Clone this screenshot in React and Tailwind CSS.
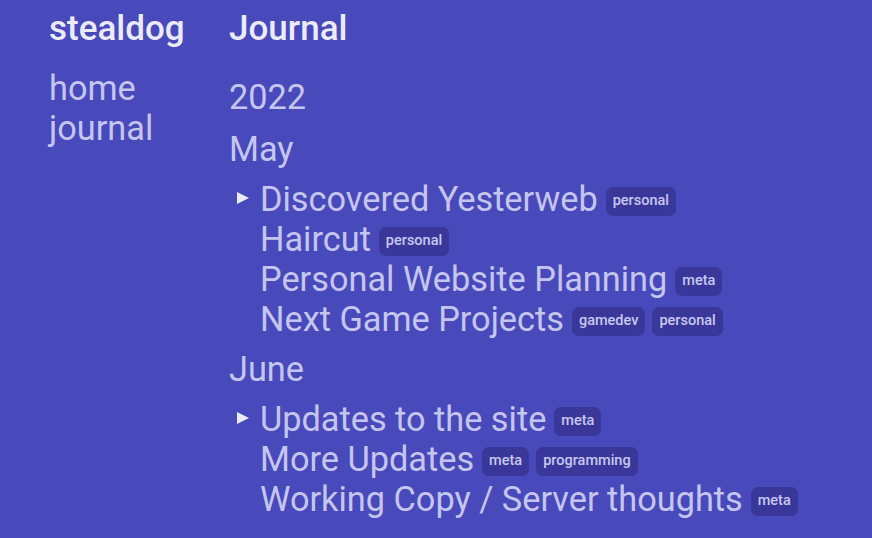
export default function App() {
  const Tag = ({ children }) => (
    <span className="relative top-[2px] inline-flex items-center h-[29px] px-[7px] rounded-[7px] bg-[#39379a] text-[14.5px] font-medium text-[#c8c8f0] leading-none">
      {children}
    </span>
  );
  const Entry = ({ title, tags, marker }) => (
    <div className="relative flex items-center h-[40px] leading-[40px]">
      {marker && (
        <span className="absolute left-[-23px] top-[13px] w-0 h-0 border-y-[6px] border-y-transparent border-l-[12px] border-l-[#ecebfa]" />
      )}
      <span>{title}</span>
      {tags.map((t, i) => (
        <span key={t} className={i === 0 ? "ml-[8px] flex" : "ml-[7px] flex"}>
          <Tag>{t}</Tag>
        </span>
      ))}
    </div>
  );
  return (
    <div className="w-[872px] h-[538px] bg-[#4849ba] overflow-hidden text-[#c5c6f0]" style={{ fontFamily: "Roboto, 'Noto Sans', sans-serif" }}>
      <div className="flex pl-[49px] pt-[9px]">
        <div className="w-[180px]">
          <div className="text-[35px] font-medium text-[#ecebfa] leading-[40px]">stealdog</div>
          <div className="mt-[19px] text-[34.3px] leading-[40px]">
            <div>home</div>
            <div>journal</div>
          </div>
        </div>
        <div>
          <div className="text-[35px] font-medium text-[#ecebfa] leading-[40px]">Journal</div>
          <div className="mt-[28px] text-[34.3px] leading-[40px]">2022</div>
          <div className="mt-[12px] text-[34.3px] leading-[40px]">May</div>
          <div className="mt-[10px] pl-[31px] text-[34.3px]">
            <Entry title="Discovered Yesterweb" tags={["personal"]} marker />
            <Entry title="Haircut" tags={["personal"]} />
            <Entry title="Personal Website Planning" tags={["meta"]} />
            <Entry title="Next Game Projects" tags={["gamedev", "personal"]} />
          </div>
          <div className="mt-[10px] text-[34.3px] leading-[40px]">June</div>
          <div className="mt-[10px] pl-[31px] text-[34.3px]">
            <Entry title="Updates to the site" tags={["meta"]} marker />
            <Entry title="More Updates" tags={["meta", "programming"]} />
            <Entry title="Working Copy / Server thoughts" tags={["meta"]} />
          </div>
        </div>
      </div>
    </div>
  );
}
